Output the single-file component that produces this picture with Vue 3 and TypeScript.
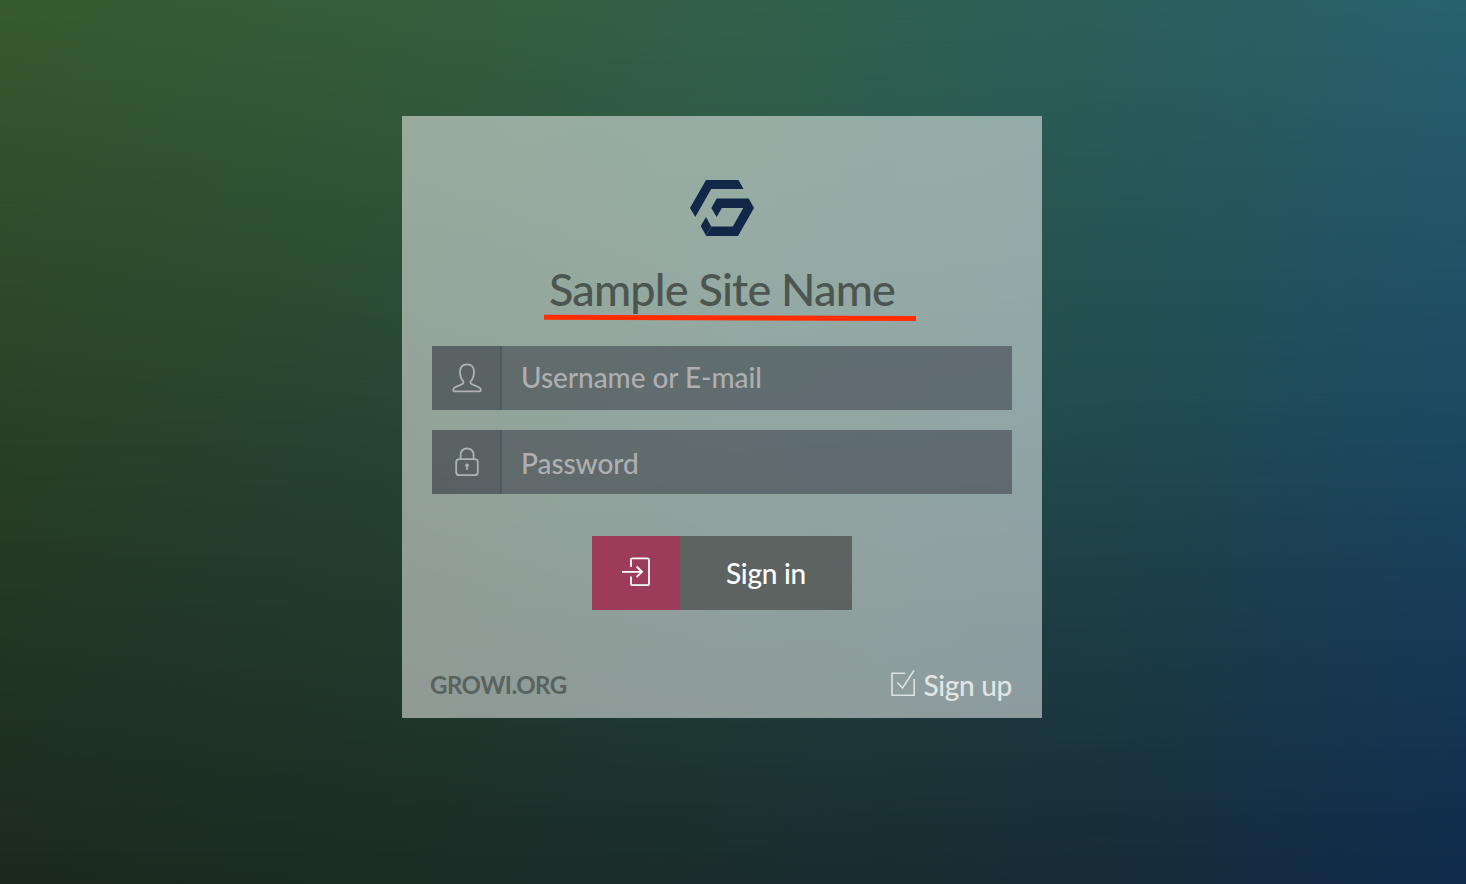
<script setup lang="ts">
import { ref } from 'vue'

const siteName = 'Sample Site Name'
const username = ref('')
const password = ref('')
</script>

<template>
  <main class="page">
    <div class="wash wash-middle"></div>
    <div class="wash wash-bottom"></div>
    <section class="card">
      <header class="brand">
        <svg class="logo" width="64" height="56" viewBox="0 0 64 56">
          <path d="M16 0H48.5L53.5 9H21.2L5.3 37L0 28Z" />
          <path d="M26.7 18.5H58.8L64 28L48 56H16.2L10.7 46L16 37L21.2 46.5H42.8L53.3 28H31.8L26.7 37L21.3 28Z" />
          <path class="seam" d="M16.2 55.5L21.2 46.5" />
        </svg>
        <h1 class="title">
          {{ siteName }}
          <svg class="underline" width="374" height="8" viewBox="0 0 374 8">
            <path d="M1 3.3L373 4.5" />
          </svg>
        </h1>
      </header>
      <form class="form" @submit.prevent>
        <label class="field">
          <span class="addon">
            <svg width="30" height="30" viewBox="0 0 30 30">
              <path d="M15 1.4C10.8 1.4 8 4 8 8.5C8 13 9.3 16.2 11.2 18.2C12 19.8 11.4 20.6 10 21.2L3.2 24.2C1.8 24.9 1.3 25.4 1.3 26.6V27.4Q1.3 28.3 2.3 28.3H27.7Q28.7 28.3 28.7 27.4V26.6C28.7 25.4 28.2 24.9 26.8 24.2L20 21.2C18.6 20.6 18 19.8 18.8 18.2C20.7 16.2 22 13 22 8.5C22 4 19.2 1.4 15 1.4Z" />
            </svg>
          </span>
          <input v-model="username" class="input" type="text" placeholder="Username or E-mail" />
        </label>
        <label class="field">
          <span class="addon">
            <svg width="30" height="30" viewBox="0 0 30 30">
              <rect x="4.2" y="12.2" width="21.6" height="16" rx="3" />
              <path d="M8.6 12V8C8.6 4 11 1.5 15 1.5S21.6 4 21.6 8V12" />
              <circle class="solid" cx="15" cy="18.4" r="1.8" />
              <path class="keyhole" d="M15 18.5V23" />
            </svg>
          </span>
          <input v-model="password" class="input input-password" type="password" placeholder="Password" />
        </label>
        <button class="submit" type="submit">
          <span class="submit-icon">
            <svg width="30" height="30" viewBox="0 0 30 30">
              <path d="M10 10V3Q10 1.3 11.7 1.3H26.3Q28 1.3 28 3V26.5Q28 28.2 26.3 28.2H11.7Q10 28.2 10 26.5V19.5M1 14.8H20.5M15.6 9.5L21 14.8L15.6 20" />
            </svg>
          </span>
          <span class="submit-label">Sign in</span>
        </button>
      </form>
      <footer class="links">
        <a class="org">GROWI.ORG</a>
        <a class="signup">
          <svg width="26" height="28" viewBox="0 0 26 28">
            <path d="M15.2 4.2H2V26.2H24.2V10M7.4 13.5L12.5 19L24 1.5" />
          </svg>
          <span>Sign up</span>
        </a>
      </footer>
    </section>
  </main>
</template>

<style>
body {
  margin: 0;
}
</style>

<style scoped>
.page {
  position: relative;
  box-sizing: border-box;
  width: 100%;
  height: 100vh;
  min-height: 884px;
  overflow: hidden;
  padding: 116px 0 0 402px;
  font-family: Lato, "Open Sans", sans-serif;
  background: linear-gradient(90deg, #375a2f 0%, #365e3b 25%, #33624a 50%, #2d605b 75%, #29626f 100%);
}

.wash {
  position: absolute;
  inset: 0;
}

.wash-middle {
  background: linear-gradient(90deg, #284027 0%, #274331 25%, #254d44 50%, #214a4d 75%, #1c4762 100%);
  mask-image: linear-gradient(transparent 0%, #000 50%);
}

.wash-bottom {
  background: linear-gradient(90deg, #1c291d 0%, #1b2c24 25%, #1a2c2c 50%, #172b36 75%, #102a4c 100%);
  mask-image: linear-gradient(transparent 50%, #000 100%);
}

.card {
  position: relative;
  box-sizing: border-box;
  display: flex;
  flex-direction: column;
  width: 640px;
  height: 602px;
  padding: 64px 30px 0;
  background: rgba(255, 255, 255, 0.5);
}

.brand {
  display: flex;
  flex-direction: column;
  align-items: center;
}

.logo {
  fill: #122848;
}

.logo .seam {
  stroke: #53697a;
  stroke-width: 0.5;
}

.title {
  position: relative;
  height: 56px;
  margin: 25px 0 29px;
  color: #4b5651;
  font-size: 45px;
  font-weight: 500;
  letter-spacing: -0.8px;
  line-height: 56px;
  white-space: nowrap;
}

.underline {
  position: absolute;
  top: 53px;
  left: -6px;
  fill: none;
  stroke: #ff2d00;
  stroke-width: 5;
}

.form {
  display: flex;
  flex-direction: column;
  gap: 20px;
}

.field {
  display: flex;
  height: 64px;
}

.addon {
  box-sizing: border-box;
  display: flex;
  align-items: center;
  justify-content: center;
  width: 70px;
  border-right: 2px solid #4f5b62;
  background: rgba(30, 33, 44, 0.5);
  background-clip: padding-box;
  padding-left: 2px;
}

.addon svg {
  fill: none;
  stroke: #b0b1b1;
  stroke-width: 1.8;
}

.addon .solid {
  fill: #b0b1b1;
  stroke: none;
}

.addon .keyhole {
  stroke-width: 1.6;
}

.input {
  box-sizing: border-box;
  flex: 1;
  min-width: 0;
  height: 64px;
  padding: 0 19px 2px;
  border: 0;
  border-radius: 0;
  outline: 0;
  background: rgba(46, 49, 59, 0.5);
  color: #fff;
  font: 500 28px Lato, "Open Sans", sans-serif;
  letter-spacing: -0.05px;
}

.input-password {
  padding-top: 4px;
}

.input::placeholder {
  color: #aeafb0;
  opacity: 1;
}

.submit {
  display: flex;
  align-self: center;
  width: 260px;
  height: 74px;
  margin-top: 22px;
  padding: 0;
  border: 0;
  background: none;
  color: #fff;
  font: 500 28px Lato, "Open Sans", sans-serif;
  letter-spacing: -0.25px;
}

.submit-icon {
  display: flex;
  align-items: center;
  justify-content: center;
  width: 88px;
  height: 74px;
  background: #9c3c5a;
}

.submit-icon svg {
  margin-bottom: 2px;
  fill: none;
  stroke: #fff;
  stroke-width: 1.8;
}

.submit-label {
  flex: 1;
  height: 74px;
  background: rgba(40, 38, 36, 0.5);
  line-height: 74px;
  text-align: center;
}

.links {
  display: flex;
  justify-content: space-between;
  align-items: center;
  height: 40px;
  margin-top: 55px;
}

.org {
  margin: 0 0 1px -2px;
  color: #58625f;
  font-size: 24px;
  font-weight: 700;
  letter-spacing: -0.5px;
}

.signup {
  display: flex;
  align-items: center;
  gap: 7px;
  color: #e0e5e7;
  font-size: 28px;
  font-weight: 500;
  letter-spacing: -0.3px;
}

.signup svg {
  margin-bottom: 4px;
  fill: none;
  stroke: #dce2e4;
  stroke-width: 1.6;
}
</style>
